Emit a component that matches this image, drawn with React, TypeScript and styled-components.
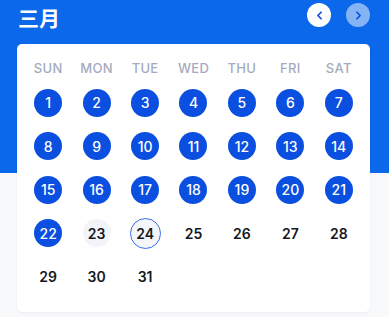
import { FC } from "react";
import styled, { createGlobalStyle, css } from "styled-components";
import { ChevronLeft, ChevronRight } from "lucide-react";

const BLUE = "#0b68ea";
const DAY_BLUE = "#0a4fe0";

const GlobalStyle = createGlobalStyle`
  html, body {
    margin: 0;
    padding: 0;
  }
  body {
    width: 389px;
    height: 317px;
    overflow: hidden;
    font-family: Inter, "Noto Sans", "Noto Sans CJK SC", sans-serif;
    background: linear-gradient(to bottom, ${BLUE} 0, ${BLUE} 173px, #f8f9fb 173px);
  }
`;

const Page = styled.div`
  display: flex;
  flex-direction: column;
  padding: 0 19px 0 17px;
`;

const Header = styled.div`
  display: flex;
  align-items: center;
  justify-content: space-between;
  height: 32px;
  margin-bottom: 12px;
`;

const Title = styled.h1`
  margin: 0;
  padding-left: 1px;
  color: #fff;
  font-family: "Noto Sans CJK SC", sans-serif;
  font-size: 21px;
  font-weight: 700;
  line-height: 1;
  padding-top: 3px;
`;

const NavGroup = styled.div`
  display: flex;
  gap: 15px;
  margin-top: -2px;
`;

const NavButton = styled.button<{ $muted?: boolean }>`
  width: 24px;
  height: 24px;
  border-radius: 50%;
  border: none;
  padding: 0;
  display: flex;
  align-items: center;
  justify-content: center;
  color: ${DAY_BLUE};
  background: ${({ $muted }) => ($muted ? "rgba(255,255,255,0.5)" : "#fff")};
`;

const Card = styled.div`
  background: #fff;
  border-radius: 5px;
  box-shadow: 0 1px 3px rgba(20, 30, 60, 0.06);
  padding: 16px 7px 13px;
`;

const Grid = styled.div`
  display: grid;
  grid-template-columns: repeat(7, 1fr);
`;

const WeekDay = styled.div`
  text-align: center;
  font-size: 13px;
  font-weight: 500;
  color: #a3abbd;
  line-height: 16px;
  height: 21px;
  letter-spacing: 0.3px;
`;

const Cell = styled.div`
  height: 43.5px;
  display: flex;
  align-items: center;
  justify-content: center;
`;

type DayKind = "done" | "plain" | "soft" | "today";

const Day = styled.div<{ $kind: DayKind }>`
  width: 28px;
  height: 28px;
  border-radius: 50%;
  box-sizing: border-box;
  display: flex;
  align-items: center;
  justify-content: center;
  font-size: 14px;
  font-weight: 600;
  color: #16181d;
  ${({ $kind }) =>
    $kind === "done" &&
    css`
      background: ${DAY_BLUE};
      color: #fff;
      font-weight: 500;
    `}
  ${({ $kind }) =>
    $kind === "soft" &&
    css`
      background: #f2f4f9;
    `}
  ${({ $kind }) =>
    $kind === "today" &&
    css`
      width: 31px;
      height: 31px;
      background: #f4f6fa;
      border: 1px solid #3a6ff2;
    `}
`;

const WEEK = ["SUN", "MON", "TUE", "WED", "THU", "FRI", "SAT"];

const kindFor = (d: number): DayKind => {
  if (d <= 22) return "done";
  if (d === 23) return "soft";
  if (d === 24) return "today";
  return "plain";
};

const App: FC = () => {
  const days = Array.from({ length: 31 }, (_, i) => i + 1);
  return (
    <>
      <GlobalStyle />
      <Page>
        <Header>
          <Title>三月</Title>
          <NavGroup>
            <NavButton>
              <ChevronLeft size={13} strokeWidth={3.2} />
            </NavButton>
            <NavButton $muted>
              <ChevronRight size={13} strokeWidth={3.2} />
            </NavButton>
          </NavGroup>
        </Header>
        <Card>
          <Grid>
            {WEEK.map((w) => (
              <WeekDay key={w}>{w}</WeekDay>
            ))}
            {days.map((d) => (
              <Cell key={d}>
                <Day $kind={kindFor(d)}>{d}</Day>
              </Cell>
            ))}
          </Grid>
        </Card>
      </Page>
    </>
  );
};

export default App;
